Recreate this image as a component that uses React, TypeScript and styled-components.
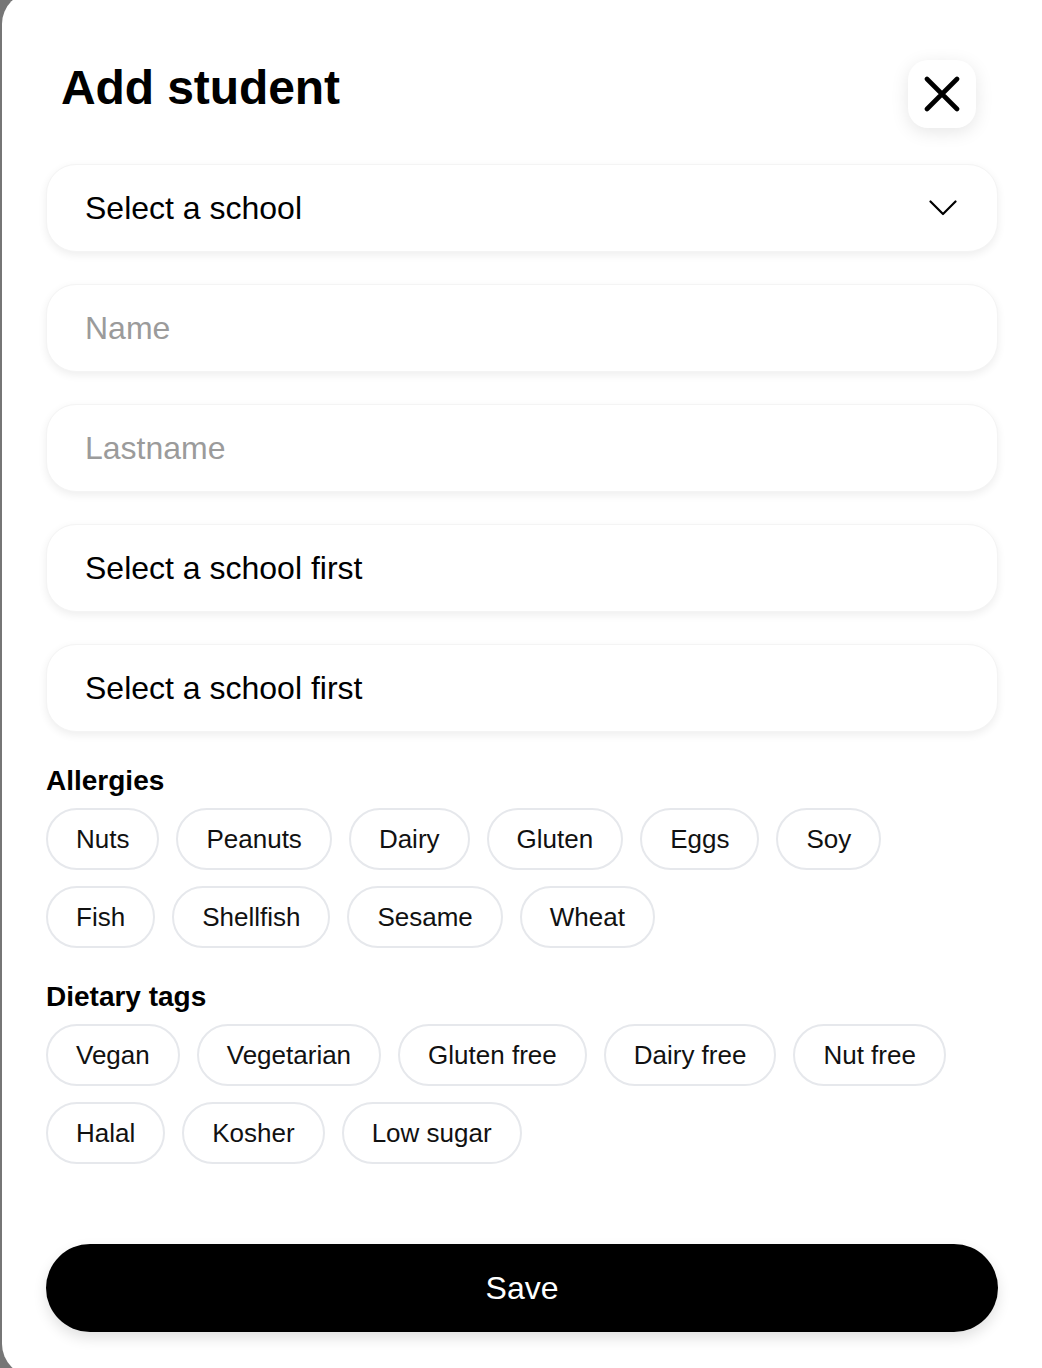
import React from "react";
import styled, { createGlobalStyle } from "styled-components";

const GlobalStyle = createGlobalStyle`
  html, body {
    margin: 0;
    padding: 0;
    background: #767676;
    overflow: hidden;
  }
  body {
    font-family: "Liberation Sans", Arial, Helvetica, sans-serif;
    color: #000;
  }
  * { box-sizing: border-box; }
`;

const Page = styled.div`
  width: 1042px;
  height: 1368px;
  padding-left: 2px;
  overflow: hidden;
`;

const Modal = styled.div`
  margin-top: -8px;
  width: 1060px;
  height: 1384px;
  background: #fff;
  border-radius: 32px;
  padding: 68px 64px 0 44px;
  display: flex;
  flex-direction: column;
`;

const Header = styled.div`
  display: flex;
  justify-content: space-between;
  align-items: flex-start;
  padding: 0 22px 0 15px;
  margin-bottom: 36px;
`;

const Title = styled.h1`
  margin: 0;
  font-size: 48px;
  line-height: 55px;
  font-weight: 700;
  letter-spacing: -0.1px;
`;

const CloseButton = styled.button`
  width: 68px;
  height: 68px;
  border: none;
  border-radius: 20px;
  background: #fff;
  box-shadow: 0 4px 18px rgba(0, 0, 0, 0.1);
  display: flex;
  align-items: center;
  justify-content: center;
  padding: 0;
  cursor: pointer;
`;

const Fields = styled.div`
  display: flex;
  flex-direction: column;
  gap: 32px;
`;

const Field = styled.div<{ $placeholder?: boolean }>`
  height: 88px;
  border-radius: 30px;
  background: #fff;
  border: 1px solid #f4f4f4;
  box-shadow: 0 3px 8px rgba(0, 0, 0, 0.07);
  display: flex;
  align-items: center;
  justify-content: space-between;
  padding: 0 40px 0 38px;
  font-size: 32px;
  color: ${(p) => (p.$placeholder ? "#9b9b9b" : "#000")};
`;

const SectionLabel = styled.div`
  margin-top: 32px;
  margin-bottom: 10px;
  font-size: 28px;
  line-height: 34px;
  font-weight: 700;
`;

const ChipGrid = styled.div`
  display: flex;
  flex-wrap: wrap;
  column-gap: 17px;
  row-gap: 16px;
`;

const Chip = styled.button`
  height: 62px;
  padding: 0 28px;
  border: 2px solid #e6e8ec;
  border-radius: 31px;
  background: #fff;
  font-family: "Liberation Sans", Arial, sans-serif;
  font-size: 26px;
  color: #111;
  cursor: pointer;
`;

const Spacer = styled.div`
  flex: 1;
`;

const SaveButton = styled.button`
  height: 88px;
  width: 100%;
  border: none;
  border-radius: 44px;
  background: #000;
  color: #fff;
  font-family: "Liberation Sans", Arial, sans-serif;
  font-size: 32px;
  box-shadow: 0 6px 14px rgba(0, 0, 0, 0.12);
  margin-bottom: 44px;
  cursor: pointer;
`;

const allergies = ["Nuts", "Peanuts", "Dairy", "Gluten", "Eggs", "Soy", "Fish", "Shellfish", "Sesame", "Wheat"];
const dietary = ["Vegan", "Vegetarian", "Gluten free", "Dairy free", "Nut free", "Halal", "Kosher", "Low sugar"];

export default function App() {
  return (
    <>
      <GlobalStyle />
      <Page>
        <Modal>
          <Header>
            <Title>Add student</Title>
            <CloseButton aria-label="Close">
              <svg width="36" height="36" viewBox="0 0 36 36" fill="none">
                <path d="M3 3L33 33M33 3L3 33" stroke="#000" strokeWidth="4.6" strokeLinecap="round" />
              </svg>
            </CloseButton>
          </Header>
          <Fields>
            <Field>
              <span>Select a school</span>
              <svg width="28" height="16" viewBox="0 0 28 16" fill="none">
                <path d="M1.5 1.5L14 14L26.5 1.5" stroke="#000" strokeWidth="2.2" strokeLinecap="round" strokeLinejoin="round" />
              </svg>
            </Field>
            <Field $placeholder>Name</Field>
            <Field $placeholder>Lastname</Field>
            <Field>Select a school first</Field>
            <Field>Select a school first</Field>
          </Fields>
          <SectionLabel>Allergies</SectionLabel>
          <ChipGrid>
            {allergies.map((a) => (
              <Chip key={a}>{a}</Chip>
            ))}
          </ChipGrid>
          <SectionLabel>Dietary tags</SectionLabel>
          <ChipGrid>
            {dietary.map((d) => (
              <Chip key={d}>{d}</Chip>
            ))}
          </ChipGrid>
          <Spacer />
          <SaveButton>Save</SaveButton>
        </Modal>
      </Page>
    </>
  );
}
